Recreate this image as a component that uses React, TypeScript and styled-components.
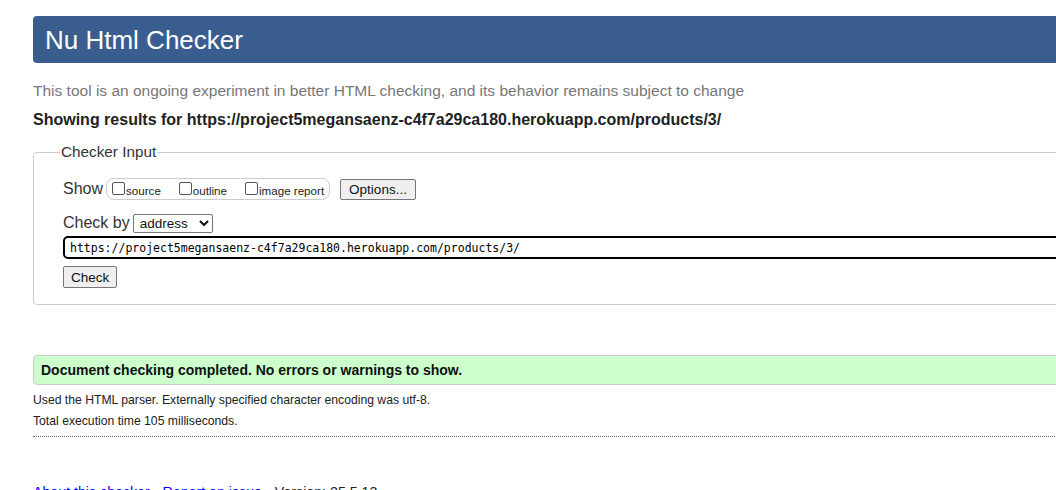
import React from 'react';
import styled, { createGlobalStyle } from 'styled-components';

const GlobalStyle = createGlobalStyle`
  html, body {
    margin: 0;
    padding: 0;
    background: #fff;
    overflow: hidden;
  }
  body {
    font-family: 'Liberation Sans', Arial, sans-serif;
    color: #222;
  }
`;

const App = () => {
  const url = 'https://project5megansaenz-c4f7a29ca180.herokuapp.com/products/3/';
  return (
    <Page>
      <GlobalStyle />
      <Header>
        <h1>Nu Html Checker</h1>
      </Header>
      <Intro>This tool is an ongoing experiment in better HTML checking, and its behavior remains subject to change</Intro>
      <ResultsFor>Showing results for {url}</ResultsFor>

      <InputBox>
        <legend>Checker Input</legend>
        <Row>
          <RowLabel>Show</RowLabel>
          <Choices>
            <Choice>
              <Box type="checkbox" />source
            </Choice>
            <Choice>
              <Box type="checkbox" />outline
            </Choice>
            <Choice>
              <Box type="checkbox" />image report
            </Choice>
          </Choices>
          <Button $wide>Options...</Button>
        </Row>
        <Row $top={12}>
          <RowLabel>Check by</RowLabel>
          <Select defaultValue="address">
            <option value="address">address</option>
            <option value="file">file upload</option>
            <option value="text">text input</option>
          </Select>
        </Row>
        <UrlField readOnly value={url} />
        <Button>Check</Button>
      </InputBox>

      <Success>Document checking completed. No errors or warnings to show.</Success>
      <Note>Used the HTML parser. Externally specified character encoding was utf-8.</Note>
      <Note $top={7}>Total execution time 105 milliseconds.</Note>
      <Rule />

      <Footer>
        <a href="#about">About this checker</a> • <a href="#issue">Report an issue</a> • Version: 25.5.13
      </Footer>
    </Page>
  );
};

const Page = styled.div`
  width: 1120px;
  padding: 16px 0 0 33px;
`;

const Header = styled.header`
  height: 47px;
  background: #3a5d8f;
  border-radius: 4px;
  display: flex;
  align-items: center;
  padding-left: 12px;

  h1 {
    margin: 0;
    font-size: 26px;
    font-weight: normal;
    color: #fff;
    line-height: 1;
  }
`;

const Intro = styled.p`
  margin: 19px 0 0;
  font-size: 15.5px;
  line-height: 18px;
  color: #777;
`;

const ResultsFor = styled.p`
  margin: 11px 0 0;
  font-size: 16px;
  line-height: 18px;
  font-weight: bold;
  color: #222;
`;

const InputBox = styled.fieldset`
  margin: 14px 0 0;
  border: 1px solid #ccc;
  border-radius: 4px;
  padding: 17px 0 16px 29px;
  min-width: 0;

  legend {
    margin-left: -3px;
    padding: 0 1px;
    font-size: 15.3px;
    line-height: 18px;
    color: #333;
  }
`;

const Row = styled.div<{ $top?: number }>`
  display: flex;
  align-items: center;
  margin-top: ${(p) => p.$top ?? 0}px;
  height: 22px;
`;

const RowLabel = styled.span`
  font-size: 16px;
  color: #333;
  margin-right: 3px;
`;

const Choices = styled.span`
  display: flex;
  align-items: center;
  height: 20px;
  border: 1px solid #ccc;
  border-radius: 8px;
  padding: 0 5px 0 5px;
  gap: 18px;
  margin-right: 10px;
`;

const Choice = styled.label`
  display: flex;
  align-items: center;
  font-size: 11.6px;
  color: #222;
  padding-top: 2px;

  input {
    margin-top: -3px;
  }
`;

const Box = styled.input`
  appearance: none;
  width: 13px;
  height: 13px;
  margin: 0 1px 0 0;
  border: 1px solid #555;
  border-radius: 2px;
  background: #fff;
`;

const Button = styled.button<{ $wide?: boolean }>`
  height: ${(p) => (p.$wide ? 21 : 22)}px;
  padding: 0 ${(p) => (p.$wide ? 8 : 7)}px;
  font-family: 'Liberation Sans', Arial, sans-serif;
  font-size: 13.5px;
  color: #111;
  background: #efefef;
  border: 1px solid #767676;
  border-radius: 2px;
`;

const Select = styled.select`
  width: 80px;
  height: 19px;
  padding: 0 0 0 2px;
  font-family: 'Liberation Sans', Arial, sans-serif;
  font-size: 13.5px;
  color: #111;
  border: 1px solid #767676;
  border-radius: 2px;
  background: #fff;
`;

const UrlField = styled.input`
  display: block;
  box-sizing: border-box;
  width: 1100px;
  height: 23px;
  margin: 2px 0 7px;
  padding: 0 0 0 5px;
  border: 2px solid #000;
  border-radius: 5px;
  font-family: 'DejaVu Sans Mono', 'Liberation Mono', monospace;
  font-size: 11.5px;
  color: #000;
  outline: none;
`;

const Success = styled.div`
  margin-top: 50px;
  height: 30px;
  box-sizing: border-box;
  display: flex;
  align-items: center;
  padding-left: 7px;
  background: #ccffcc;
  border: 1px solid #ccc;
  border-radius: 4px;
  font-size: 14px;
  font-weight: bold;
  color: #111;
`;

const Note = styled.p<{ $top?: number }>`
  margin: ${(p) => p.$top ?? 8}px 0 0;
  font-size: 12.2px;
  line-height: 14px;
  color: #222;
`;

const Rule = styled.hr`
  margin: 8px 0 0;
  border: 0;
  border-top: 1px dotted #666;
`;

const Footer = styled.p`
  margin: 47px 0 0;
  font-size: 14.2px;
  line-height: 16px;
  color: #222;

  a {
    color: #00f;
    text-decoration: none;
  }
`;

export default App;
